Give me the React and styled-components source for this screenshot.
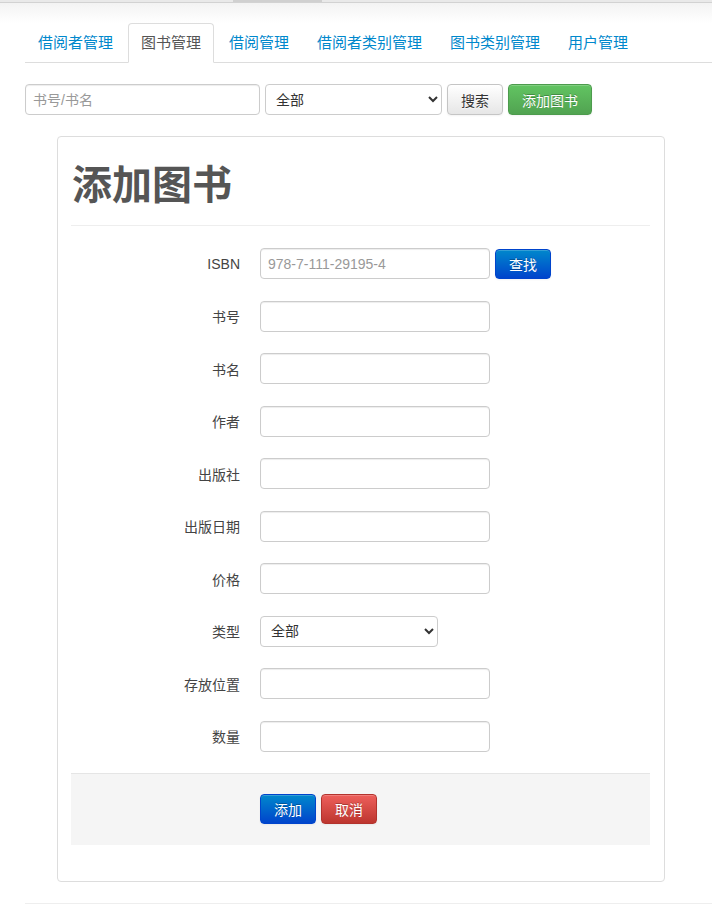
import React from 'react';
import styled, { createGlobalStyle } from 'styled-components';

const GlobalStyle = createGlobalStyle`
    html, body {
        margin: 0;
        padding: 0;
        background: #fff;
    }
    body {
        font-family: "Liberation Sans", "Noto Sans CJK SC", sans-serif;
        font-size: 14px;
        color: #333;
    }
    * {
        box-sizing: border-box;
    }
`

const TopBar = styled.div`
    height: 3px;
    background: #e9e9e9;
    border-bottom: 1px solid #d2d2d2;
    display: flex;
`

const TopActive = styled.div`
    margin-left: 233px;
    width: 89px;
    background: #d0d0d0;
`

const Page = styled.div`
    background: linear-gradient(#f3f3f3, #fff 20px) no-repeat;
    padding: 20px 0 0 25px;
`

const Tabs = styled.ul`
    list-style: none;
    margin: 0;
    padding: 0;
    display: flex;
    border-bottom: 1px solid #ddd;
`

const Tab = styled.li`
    margin-right: 2px;
    margin-bottom: -1px;
    height: 40px;
    padding: 0 12px 4px;
    display: flex;
    align-items: center;
    font-size: 15px;
    color: ${props => props.active ? '#555' : '#0088cc'};
    background: ${props => props.active ? '#fff' : 'transparent'};
    border: 1px solid ${props => props.active ? '#ddd' : 'transparent'};
    border-bottom-color: ${props => props.active ? '#fff' : 'transparent'};
    border-radius: 4px 4px 0 0;
`

const SearchRow = styled.div`
    display: flex;
    gap: 5px;
    margin-top: 21px;
`

const TextInput = styled.input`
    width: ${props => props.width || 230}px;
    height: 31px;
    padding: 4px 7px;
    font: inherit;
    font-size: 14px;
    color: #555;
    border: 1px solid #ccc;
    border-radius: 4px;
    box-shadow: inset 0 1px 1px rgba(0, 0, 0, 0.075);
    &::placeholder {
        color: #999;
    }
`

const Select = styled.select`
    width: ${props => props.width}px;
    height: 31px;
    padding: 4px 6px;
    font: inherit;
    font-size: 14px;
    color: #333;
    background: #fff;
    border: 1px solid #ccc;
    border-radius: 4px;
`

const Button = styled.button`
    height: ${props => props.tall ? 31 : 30}px;
    padding: 0 13px;
    font: inherit;
    font-size: 14px;
    border-radius: 4px;
    cursor: pointer;
    color: ${props => props.kind === 'default' ? '#333' : '#fff'};
    text-shadow: ${props => props.kind === 'default' ? '0 1px 1px rgba(255,255,255,0.75)' : '0 -1px 0 rgba(0,0,0,0.25)'};
    border: 1px solid ${props => ({
        default: '#c5c5c5',
        success: '#4d9b4d',
        primary: '#0044cc',
        danger: '#b3332d',
    })[props.kind]};
    background: ${props => ({
        default: 'linear-gradient(#ffffff, #e6e6e6)',
        success: 'linear-gradient(#62c462, #51a351)',
        primary: 'linear-gradient(#0088cc, #0044cc)',
        danger: 'linear-gradient(#ee5f5b, #bd362f)',
    })[props.kind]};
    box-shadow: inset 0 1px 0 rgba(255, 255, 255, 0.2), 0 1px 2px rgba(0, 0, 0, 0.05);
`

const Panel = styled.div`
    width: 608px;
    margin: 21px 0 0 32px;
    padding: 14px 14px 36px 13px;
    border: 1px solid #ddd;
    border-radius: 4px;
`

const Title = styled.h1`
    margin: 0;
    padding: 8px 0 14px 1px;
    font-size: 40px;
    line-height: 52px;
    font-weight: 700;
    color: #555;
    border-bottom: 1px solid #eee;
`

const Form = styled.div`
    display: flex;
    flex-direction: column;
    gap: 21.5px;
    padding: 22px 0 21px;
`

const Row = styled.div`
    display: flex;
    align-items: center;
    gap: 5px;
`

const Label = styled.label`
    width: 169px;
    margin-right: 15px;
    text-align: right;
    font-size: 14px;
    color: #444;
`

const Actions = styled.div`
    display: flex;
    gap: 5px;
    padding: 20px 0 21px 189px;
    background: #f5f5f5;
    border-top: 1px solid #e5e5e5;
`

const Footer = styled.hr`
    margin: 21px 0 0;
    border: 0;
    border-top: 1px solid #eee;
`

const fields = ['书号', '书名', '作者', '出版社', '出版日期', '价格']
const tail = ['存放位置', '数量']
const tabs = ['借阅者管理', '图书管理', '借阅管理', '借阅者类别管理', '图书类别管理', '用户管理']

const App = () => {
    return (
        <>
            <GlobalStyle />
            <TopBar><TopActive /></TopBar>
            <Page>
                <Tabs>
                    {tabs.map((t, i) => <Tab key={t} active={i === 1}>{t}</Tab>)}
                </Tabs>
                <SearchRow>
                    <TextInput width={235} placeholder="书号/书名" />
                    <Select width={177}><option>全部</option></Select>
                    <Button tall kind="default">搜索</Button>
                    <Button tall kind="success">添加图书</Button>
                </SearchRow>
                <Panel>
                    <Title>添加图书</Title>
                    <Form>
                        <Row>
                            <Label>ISBN</Label>
                            <TextInput placeholder="978-7-111-29195-4" />
                            <Button kind="primary">查找</Button>
                        </Row>
                        {fields.map(f => (
                            <Row key={f}>
                                <Label>{f}</Label>
                                <TextInput />
                            </Row>
                        ))}
                        <Row>
                            <Label>类型</Label>
                            <Select width={178}><option>全部</option></Select>
                        </Row>
                        {tail.map(f => (
                            <Row key={f}>
                                <Label>{f}</Label>
                                <TextInput />
                            </Row>
                        ))}
                    </Form>
                    <Actions>
                        <Button kind="primary">添加</Button>
                        <Button kind="danger">取消</Button>
                    </Actions>
                </Panel>
                <Footer />
            </Page>
        </>
    );
};

export default App;
